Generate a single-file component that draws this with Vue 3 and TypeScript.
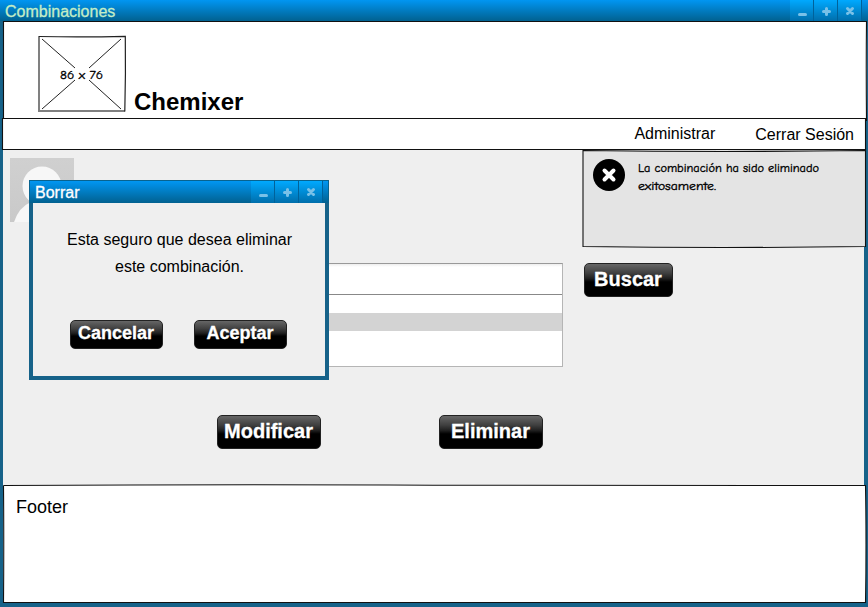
<script setup lang="ts">
interface MenuEntry {
  label: string
  kind: string
}

const controls = ['min', 'max', 'close'] as const
const menu: MenuEntry[] = [
  { label: 'Administrar', kind: 'admin' },
  { label: 'Cerrar Sesión', kind: 'logout' },
]
</script>

<template>
  <div class="window">
    <header class="titlebar">
      <span class="title">Combinaciones</span>
      <div class="controls">
        <button v-for="c in controls" :key="c" class="control" :aria-label="c">
          <svg width="23" height="20" viewBox="0 0 23 20">
            <path v-if="c === 'min'" d="M9.5 13.5H15.5" />
            <path v-else-if="c === 'max'" d="M9.5 10.5H15.5M12.5 7.5V13.5" />
            <path v-else d="M9.5 7.5L14.5 12.5M14.5 7.5L9.5 12.5" />
          </svg>
        </button>
      </div>
    </header>

    <section class="brand">
      <svg class="outline" width="864" height="100" viewBox="0 0 864 100">
        <path d="M.5 97V.5H863.5Q863 45 863.5 100" />
      </svg>
      <svg class="logo" width="90" height="79" viewBox="0 0 90 79">
        <path class="soft" d="M2 1V76H88" />
        <path class="edge" d="M2 1.500Q45 2.300 88.300 1.300Q88.800 40 87.800 76.500" />
        <path class="cross" d="M5 4L38 33M84 4L52 33M5 74L38 45M84 74L52 45" />
        <text x="23" y="43.500" textLength="43" lengthAdjust="spacingAndGlyphs">86 x 76</text>
      </svg>
      <h1>Chemixer</h1>
    </section>

    <nav class="menu">
      <svg class="outline" width="864" height="33" viewBox="0 0 864 33">
        <path d="M.5.500Q430 1.300 863.500.500V31.500Q430 32 .500 31.500Z" />
      </svg>
      <a v-for="m in menu" :key="m.kind" :class="m.kind">{{ m.label }}</a>
    </nav>

    <main class="content">
      <div class="top">
        <svg class="avatar" width="64" height="64" viewBox="0 0 64 64">
          <defs>
            <linearGradient id="avatarBg" x2="0" y2="1">
              <stop stop-color="#d0d0d0" />
              <stop offset="1" stop-color="#c9c9c9" />
            </linearGradient>
          </defs>
          <path fill="url(#avatarBg)" d="M0 0H64V64H0Z" />
          <circle cx="32" cy="28" r="19.500" fill="#f7f7f7" />
          <path fill="#f7f7f7" d="M4 64Q9 49 21 44H43Q55 49 60 64Z" />
        </svg>
        <div class="alert">
          <svg class="outline" width="283" height="99" viewBox="0 0 283 99">
            <path d="M0 .500Q140 2.400 282.500.500V96.500Q140 98.500 0 96.500Z" />
          </svg>
          <svg class="badge" width="32" height="32" viewBox="0 0 32 32">
            <circle cx="16" cy="16" r="16" />
            <path d="M11.500 11.500L20.500 20.500M20.500 11.500L11.500 20.500" />
          </svg>
          <svg class="message" width="190" height="40" viewBox="0 0 190 40">
            <text x="0" y="13" textLength="181" lengthAdjust="spacingAndGlyphs">La combinación ha sido eliminado</text>
            <text x="0" y="31" textLength="78" lengthAdjust="spacingAndGlyphs">exitosamente.</text>
          </svg>
        </div>
      </div>

      <div class="search">
        <div class="combo">
          <div class="field"></div>
          <div class="list"><div class="selected"></div></div>
        </div>
        <button class="btn find"><span>Buscar</span></button>
      </div>

      <div class="actions">
        <button class="btn wide modify"><span>Modificar</span></button>
        <button class="btn wide remove"><span>Eliminar</span></button>
      </div>
    </main>

    <footer class="footer">
      <svg class="outline" width="864" height="119" viewBox="0 0 864 119">
        <path d="M.5.500Q230 -.8 430 .2T862.500.500Q863.500 60 862.500 117.500Q430 118.500 .500 117.500Q1 60 .500.500" />
      </svg>
      <span>Footer</span>
    </footer>

    <section class="dialog" role="dialog">
      <header class="titlebar">
        <span class="title">Borrar</span>
        <div class="controls">
          <button v-for="c in controls" :key="c" class="control" :aria-label="c">
            <svg width="23" height="21" viewBox="0 0 23 21">
              <path v-if="c === 'min'" d="M9.500 13.500H15.500" />
              <path v-else-if="c === 'max'" d="M9.500 10.500H15.500M12.500 7.500V13.500" />
              <path v-else d="M9.500 7.500L14.500 12.500M14.500 7.500L9.500 12.500" />
            </svg>
          </button>
        </div>
      </header>
      <div class="dialog-body">
        <p>Esta seguro que desea eliminar<br />este combinación.</p>
        <div class="choices">
          <button class="btn small cancel"><span>Cancelar</span></button>
          <button class="btn small accept"><span>Aceptar</span></button>
        </div>
      </div>
    </section>
  </div>
</template>

<style>
body {
  margin: 0;
  overflow: hidden;
}
</style>

<style scoped>
* {
  box-sizing: border-box;
}
.window {
  position: relative;
  width: 868px;
  height: 607px;
  background: #166289;
  display: flex;
  flex-direction: column;
  overflow: hidden;
  color: #000;
  font-family: "Liberation Sans", Arial, sans-serif;
}
button {
  border: 0;
  padding: 0;
  margin: 0;
  font-family: inherit;
}
.titlebar {
  flex: none;
  height: 21px;
  display: flex;
  justify-content: space-between;
  background: linear-gradient(#0196f2, #016190);
}
.title {
  padding-left: 5px;
  font-size: 16px;
  line-height: 23px;
  color: #c4edc6;
  -webkit-text-stroke: 0.3px currentColor;
}
.controls {
  display: flex;
  gap: 1px;
  padding-right: 6px;
}
.window > .titlebar .controls {
  padding-right: 7px;
}
.control {
  width: 23px;
  height: 100%;
  background: linear-gradient(#00a9ff, #006eab);
  box-shadow: 1px 0 #00629a;
}
.control svg {
  display: block;
}
.control path {
  fill: none;
  stroke: #79c1e8;
  stroke-width: 3;
  stroke-linecap: round;
}
.outline {
  position: absolute;
  left: 0;
  top: 0;
  overflow: visible;
  pointer-events: none;
  z-index: 1;
}
.outline path {
  fill: none;
  stroke: #111;
  stroke-width: 1.100;
}
.brand {
  position: relative;
  flex: none;
  width: 864px;
  height: 97px;
  margin-left: 3px;
  padding: 14px 0 0 34px;
  display: flex;
  background: #fff;
}
.logo {
  flex: none;
}
.logo path {
  fill: none;
  stroke: #222;
}
.logo .edge {
  stroke-width: 1.200;
}
.logo .soft {
  stroke: #808080;
  stroke-width: 2;
}
.logo text,
.message text {
  font: 12.5px "Comic Sans MS", "Comic Neue", "Noto Sans", sans-serif;
  stroke: #000;
  stroke-width: 0.35px;
}
h1 {
  margin: 53px 0 0 7px;
  font-size: 24px;
  line-height: 28px;
}
.menu {
  position: relative;
  flex: none;
  width: 864px;
  height: 32px;
  margin-left: 2px;
  padding: 1px 12px 0 0;
  display: flex;
  justify-content: flex-end;
  gap: 40px;
  background: #fff;
  font-size: 16px;
  line-height: 30px;
}
.logout {
  padding-top: 1px;
}
.content {
  flex: none;
  width: 861px;
  height: 335px;
  margin-left: 3px;
  background: #efefef;
}
.top {
  display: flex;
  justify-content: space-between;
  height: 113px;
}
.avatar {
  margin: 8px 0 0 7px;
}
.alert {
  position: relative;
  width: 283px;
  height: 97px;
  margin-right: -2px;
  padding: 9px 0 0 10px;
  display: flex;
  background: #e4e4e4;
}
.badge path {
  stroke: #fff;
  stroke-width: 4;
  stroke-linecap: round;
}
.message {
  margin-left: 13px;
}
.search {
  display: flex;
  align-items: flex-start;
  gap: 21px;
  height: 152px;
  padding-left: 214px;
}
.combo {
  width: 346px;
  height: 104px;
  border: 1px solid #b5b5b5;
  border-top-color: #999;
  background: #fff;
}
.field {
  height: 31px;
  border-bottom: 1px solid #888;
  background: linear-gradient(#eee, #fff 3px);
}
.list {
  padding-top: 18px;
}
.selected {
  height: 18px;
  background: #d3d3d3;
}
.btn {
  width: 89px;
  height: 34px;
  border: 1px solid #222;
  border-radius: 5px;
  background: linear-gradient(#666, #404040 28%, #202020 45%, #000 56%);
  color: #fff;
  font-weight: 700;
  font-size: 20px;
  line-height: 31px;
  white-space: nowrap;
  display: flex;
  justify-content: center;
  padding-right: 1px;
  -webkit-text-stroke: 0.3px #fff;
}
.btn.wide {
  width: 104px;
}
.btn.small {
  width: 93px;
  height: 29px;
  font-size: 18px;
  line-height: 25px;
}
.actions {
  display: flex;
  gap: 118px;
  padding-left: 214px;
}
.footer {
  position: relative;
  flex: none;
  width: 863px;
  height: 118px;
  margin-left: 3px;
  padding: 11px 0 0 13px;
  background: #fff;
  font-size: 18px;
  line-height: 22px;
}
.dialog {
  position: absolute;
  z-index: 2;
  left: 29px;
  top: 180px;
  width: 300px;
  height: 200px;
  background: #166289;
}
.dialog .titlebar {
  height: 23px;
  border: 1px solid #08638f;
  border-width: 1px 1px 0;
}
.dialog .title {
  line-height: 23px;
  color: #fff;
}
.dialog-body {
  height: 173px;
  margin: 0 4px;
  background: #efefef;
}
p {
  margin: 0;
  padding: 23px 0 0 1px;
  text-align: center;
  font-size: 16px;
  line-height: 27px;
}
.choices {
  display: flex;
  gap: 31px;
  padding: 40px 0 0 37px;
}
</style>
